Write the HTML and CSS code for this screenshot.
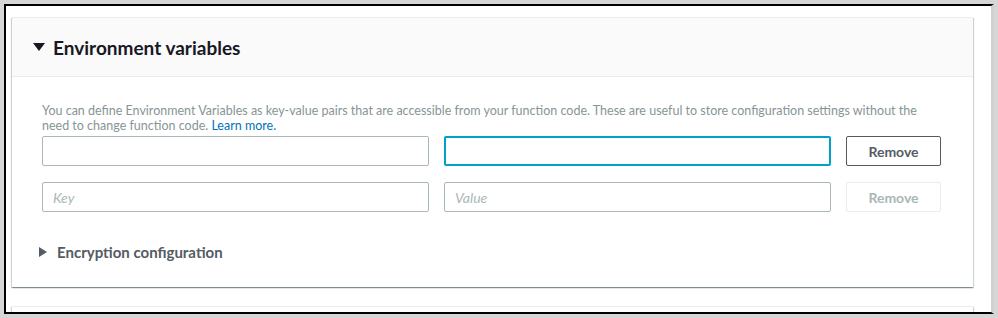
FILE: index.html
```html
<!DOCTYPE html>
<html lang="en">
<head>
    <meta charset="UTF-8">
    <meta name="viewport" content="width=device-width, initial-scale=1.0">
    <title>Environment variables</title>
    <link rel="stylesheet" href="styles.css">
</head>
<body>

    <div class="frame">
        <div class="card">
            <div class="card-header">
                <span class="caret-down"></span>
                <h2>Environment variables</h2>
            </div>

            <div class="card-body">
                <p class="help">
                    You can define Environment Variables as key-value pairs that are accessible from your function code. These are useful to store configuration settings without the
                    need to change function code. <a href="#">Learn more.</a>
                </p>

                <div class="env-row">
                    <input type="text" class="field">
                    <input type="text" class="field focused">
                    <button class="remove-btn">Remove</button>
                </div>

                <div class="env-row">
                    <input type="text" class="field" placeholder="Key">
                    <input type="text" class="field" placeholder="Value">
                    <button class="remove-btn" disabled>Remove</button>
                </div>

                <div class="sub-section">
                    <span class="caret-right"></span>
                    <span class="sub-title">Encryption configuration</span>
                </div>
            </div>
        </div>

        <div class="card next-card"></div>
    </div>

</body>
</html>
```

FILE: styles.css
```css
* {
    box-sizing: border-box;
    margin: 0;
    padding: 0;
    font-family: Lato, "Open Sans", Arial, sans-serif;
}

body {
    background: #d6d6d6;
    padding: 4px;
    overflow: hidden;
}

.frame {
    width: 990px;
    height: 310px;
    background: white;
    border-left: 2px solid #000;
    border-top: 2px solid #000;
    border-bottom: 2px solid #000;
    border-right: 3px solid #d0d0d0;
    padding: 11px 18px 0 6px;
    overflow: hidden;
}

.card {
    background: white;
    border-top: 1px solid #eaeded;
    box-shadow: 0 1px 1px 0 rgba(0, 28, 36, 0.3), 1px 1px 1px 0 rgba(0, 28, 36, 0.15), -1px 1px 1px 0 rgba(0, 28, 36, 0.15);
}

.card-header {
    display: flex;
    align-items: center;
    height: 59px;
    padding: 0 20px 0 21px;
    background: #fafafa;
    border-bottom: 1px solid #eaeded;
}

.caret-down {
    width: 0;
    height: 0;
    border-left: 6px solid transparent;
    border-right: 6px solid transparent;
    border-top: 8px solid #16191f;
    margin-right: 8px;
}

h2 {
    font-size: 19px;
    font-weight: bold;
    color: #16191f;
}

.card-body {
    padding: 26px 32px 26px 30px;
}

.help {
    max-width: 885px;
    font-size: 12.5px;
    line-height: 15px;
    color: #879596;
    margin-bottom: 3px;
}

.help a {
    color: #0073bb;
    text-decoration: none;
}

.env-row {
    display: flex;
    align-items: center;
    margin-bottom: 16px;
}

.field {
    width: 387px;
    height: 30px;
    border: 1px solid #aab7b8;
    border-radius: 2px;
    padding: 0 10px;
    font-size: 14px;
    font-style: italic;
    color: #16191f;
    outline: none;
    margin-right: 15px;
}

.field::placeholder {
    color: #aab7b8;
}

.field.focused {
    border: 2px solid #00a1c9;
}

.remove-btn {
    width: 95px;
    height: 30px;
    background: white;
    border: 1px solid #545b64;
    border-radius: 2px;
    font-size: 14px;
    font-weight: bold;
    color: #545b64;
    cursor: pointer;
}

.remove-btn:disabled {
    border-color: #eaeded;
    color: #aab7b8;
    cursor: default;
}

.sub-section {
    display: flex;
    align-items: center;
    padding-top: 15px;
    margin-left: -3px;
}

.caret-right {
    width: 0;
    height: 0;
    border-top: 5px solid transparent;
    border-bottom: 5px solid transparent;
    border-left: 8px solid #545b64;
    margin-right: 10px;
}

.sub-title {
    font-size: 15px;
    font-weight: bold;
    color: #545b64;
}

.next-card {
    margin-top: 19px;
    height: 20px;
}
```
